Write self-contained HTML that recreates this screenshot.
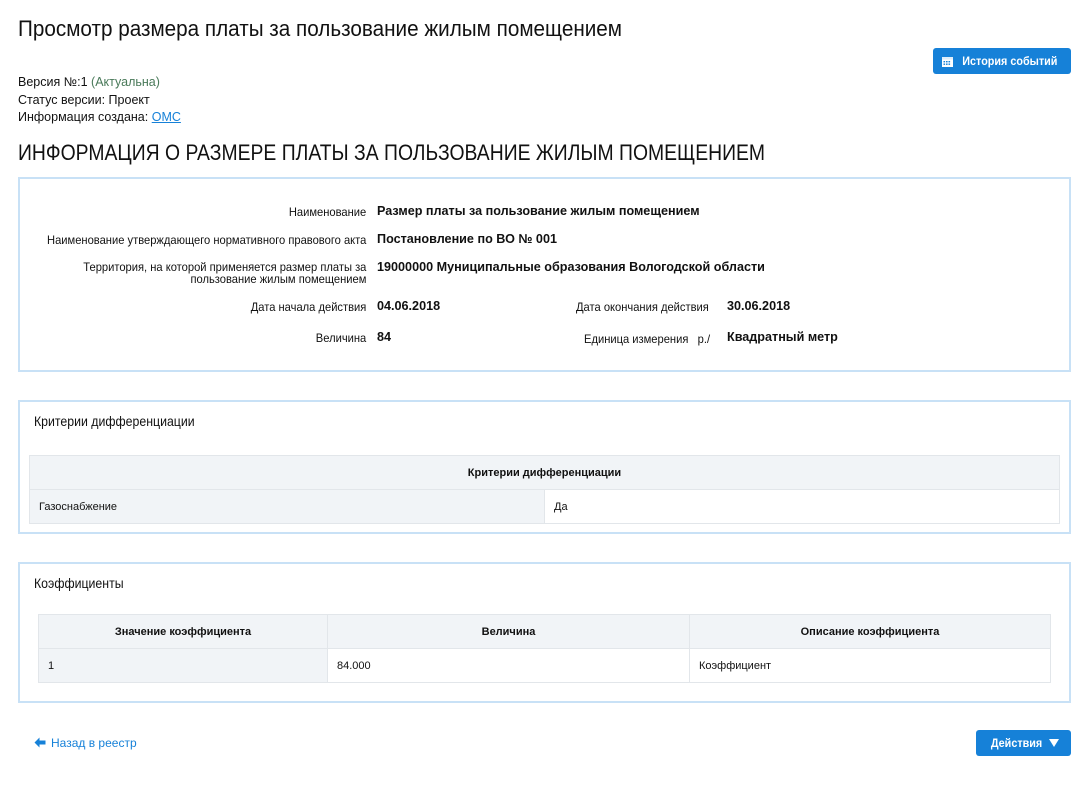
<!DOCTYPE html>
<html><head><meta charset="utf-8"><style>
*{margin:0;padding:0;box-sizing:border-box}
body{width:1091px;height:786px;background:#fff;font-family:"Liberation Sans",sans-serif;color:#111;position:relative;overflow:hidden}
.a{position:absolute;white-space:nowrap;transform-origin:left top}
.panel{position:absolute;left:18px;width:1053px;border:2px solid #c8e1f6;background:#fff}
.lbl{position:absolute;right:725px;font-size:12px;text-align:right;white-space:nowrap;transform:scaleX(0.93);transform-origin:right top}
.val{position:absolute;left:377px;font-size:13px;font-weight:bold;white-space:nowrap;transform:scaleX(0.97);transform-origin:left top}
table{border-collapse:collapse;position:absolute;font-size:11px}
td,th{border:1px solid #e2e6ea;height:34px;padding:0 9px}
th{background:#f1f4f7;font-weight:bold;text-align:center}
.btn{position:absolute;background:#1681d8;color:#fff;border-radius:3px;font-size:12px;font-weight:bold;display:flex;align-items:center;justify-content:center}
</style></head><body>
<div class="a" style="left:18px;top:16px;font-size:22px;transform:scaleX(0.94)">Просмотр размера платы за пользование жилым помещением</div>
<div class="btn" style="left:933px;top:48px;width:138px;height:26px"><svg width="11" height="11" viewBox="0 0 11 11" style="margin-right:4px"><rect x="0" y="1" width="11" height="10" fill="#fff"/><rect x="0" y="1" width="11" height="2.5" fill="#dfeefa"/><g fill="#1681d8"><rect x="1.5" y="5" width="1.6" height="1.4"/><rect x="4" y="5" width="1.6" height="1.4"/><rect x="6.5" y="5" width="1.6" height="1.4"/><rect x="1.5" y="7.5" width="1.6" height="1.4"/><rect x="4" y="7.5" width="1.6" height="1.4"/><rect x="6.5" y="7.5" width="1.6" height="1.4"/></g></svg><span style="display:inline-block;transform:scaleX(0.9)">История событий</span></div>
<div class="a" style="left:18px;top:74px;font-size:12.5px;line-height:17.5px">Версия №:1 <span style="color:#4a7a5a">(Актуальна)</span><br>Статус версии: Проект<br>Информация создана: <span style="color:#1681d8;text-decoration:underline">ОМС</span></div>
<div class="a" style="left:18px;top:140px;font-size:22px;transform:scaleX(0.88)">ИНФОРМАЦИЯ О РАЗМЕРЕ ПЛАТЫ ЗА ПОЛЬЗОВАНИЕ ЖИЛЫМ ПОМЕЩЕНИЕМ</div>
<div class="panel" style="top:177px;height:195px"></div>
<div class="lbl" style="top:205px">Наименование</div><div class="val" style="top:203px">Размер платы за пользование жилым помещением</div>
<div class="lbl" style="top:233px">Наименование утверждающего нормативного правового акта</div><div class="val" style="top:231px">Постановление по ВО № 001</div>
<div class="lbl" style="top:261px;line-height:12px">Территория, на которой применяется размер платы за<br>пользование жилым помещением</div><div class="val" style="top:259px">19000000 Муниципальные образования Вологодской области</div>
<div class="lbl" style="top:300px">Дата начала действия</div><div class="val" style="top:298px">04.06.2018</div>
<div class="a" style="left:576px;top:300px;font-size:12px;transform:scaleX(0.93)">Дата окончания действия</div><div class="a" style="left:727px;top:298px;font-size:13px;font-weight:bold;transform:scaleX(0.97)">30.06.2018</div>
<div class="lbl" style="top:331px">Величина</div><div class="val" style="top:329px">84</div>
<div class="a" style="left:584px;top:332px;font-size:12px;transform:scaleX(0.93)">Единица измерения &nbsp; р./</div><div class="a" style="left:727px;top:329px;font-size:13px;font-weight:bold;transform:scaleX(0.97)">Квадратный метр</div>
<div class="panel" style="top:400px;height:134px"></div>
<div class="a" style="left:34px;top:413px;font-size:14px;transform:scaleX(0.88)">Критерии дифференциации</div>
<table style="left:29px;top:455px;width:1031px"><tr><th colspan="2">Критерии дифференциации</th></tr><tr><td style="width:515px;background:#f1f4f7">Газоснабжение</td><td>Да</td></tr></table>
<div class="panel" style="top:562px;height:141px"></div>
<div class="a" style="left:34px;top:575px;font-size:14px;transform:scaleX(0.88)">Коэффициенты</div>
<table style="left:38px;top:614px;width:1013px"><tr><th style="width:289px">Значение коэффициента</th><th style="width:362px">Величина</th><th>Описание коэффициента</th></tr><tr><td style="background:#f1f4f7">1</td><td>84.000</td><td>Коэффициент</td></tr></table>
<div class="a" style="left:34px;top:736px;font-size:12px;color:#1681d8"><svg width="12" height="11" viewBox="0 0 12 11" style="vertical-align:-1px;margin-right:5px"><path d="M5.5 0.5L0.5 5.5L5.5 10.5V7.5H11.5V3.5H5.5Z" fill="#1681d8"/></svg>Назад в реестр</div>
<div class="btn" style="left:976px;top:730px;width:95px;height:26px"><span style="display:inline-block;transform:scaleX(0.9)">Действия</span>&nbsp;<svg width="10" height="8" viewBox="0 0 10 8"><path d="M0 0H10L5 8Z" fill="#fff"/></svg></div>
</body></html>
